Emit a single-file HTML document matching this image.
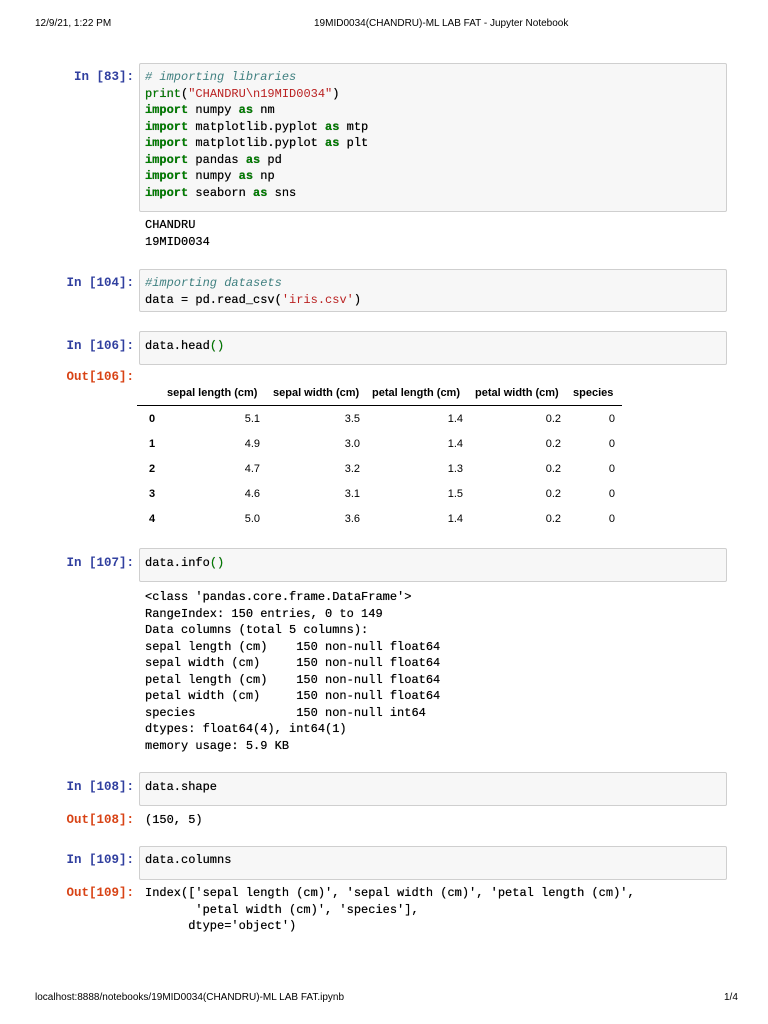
<!DOCTYPE html>
<html><head><meta charset="utf-8"><style>
body{margin:0;width:768px;height:1024px;background:#fff;position:relative;overflow:hidden;font-family:"Liberation Sans",sans-serif}
.a{position:absolute;white-space:pre}
.m{font-family:"Liberation Mono",monospace;font-size:12px;line-height:16.5px;color:#000;text-shadow:0 0 0.4px #000}
.pin{color:#303f9f;font-family:"Liberation Mono",monospace;font-size:12.5px;line-height:16.5px;text-align:right;width:76px;left:58px;font-weight:bold}
.pout{color:#d84315;font-family:"Liberation Mono",monospace;font-size:12.5px;line-height:16.5px;text-align:right;width:76px;left:58px;font-weight:bold}
.box{position:absolute;left:139px;width:586px;border:1px solid #cfcfcf;background:#f7f7f7;border-radius:2px}
.k{color:#008000;font-weight:bold}
.s{color:#ba2121;text-shadow:none}
.c{color:#408080;font-style:italic;text-shadow:none}
.hd{font-size:10px;color:#000}
.t{font-size:11px;color:#000;position:absolute}
.th{font-weight:bold}
</style></head><body>
<div class="a hd" style="left:35px;top:18px">12/9/21, 1:22 PM</div>
<div class="a hd" style="left:314px;top:18px">19MID0034(CHANDRU)-ML LAB FAT - Jupyter Notebook</div>
<div class="a hd" style="left:35px;top:992px">localhost:8888/notebooks/19MID0034(CHANDRU)-ML LAB FAT.ipynb</div>
<div class="a hd" style="left:724px;top:992px">1/4</div>

<div class="a pin" style="top:69px">In [83]:</div>
<div class="box" style="top:63px;height:147px"></div>
<div class="a m" style="left:145px;top:69px"><span class="c"># importing libraries</span>
<span class="k" style="font-weight:normal">print</span>(<span class="s">"CHANDRU\n19MID0034"</span>)
<span class="k">import</span> numpy <span class="k">as</span> nm
<span class="k">import</span> matplotlib.pyplot <span class="k">as</span> mtp
<span class="k">import</span> matplotlib.pyplot <span class="k">as</span> plt
<span class="k">import</span> pandas <span class="k">as</span> pd
<span class="k">import</span> numpy <span class="k">as</span> np
<span class="k">import</span> seaborn <span class="k">as</span> sns</div>
<div class="a m" style="left:145px;top:217px">CHANDRU
19MID0034</div>

<div class="a pin" style="top:275px">In [104]:</div>
<div class="box" style="top:269px;height:41px"></div>
<div class="a m" style="left:145px;top:275px"><span class="c">#importing datasets</span>
data = pd.read_csv(<span class="s">'iris.csv'</span>)</div>

<div class="a pin" style="top:338px">In [106]:</div>
<div class="box" style="top:331px;height:32px"></div>
<div class="a m" style="left:145px;top:338px">data.head<span style="color:#008000">()</span></div>

<div class="a pout" style="top:369px">Out[106]:</div>
<div class="t th" style="left:167px;top:387px">sepal length (cm)</div>
<div class="t th" style="left:273px;top:387px">sepal width (cm)</div>
<div class="t th" style="left:372px;top:387px">petal length (cm)</div>
<div class="t th" style="left:475px;top:387px">petal width (cm)</div>
<div class="t th" style="left:573px;top:387px">species</div>
<div style="position:absolute;left:137px;top:405px;width:485px;height:1px;background:#000"></div>

<div class="t th" style="left:149px;top:413px">0</div><div class="t" style="left:200px;width:60px;text-align:right;top:413px">5.1</div><div class="t" style="left:300px;width:60px;text-align:right;top:413px">3.5</div><div class="t" style="left:403px;width:60px;text-align:right;top:413px">1.4</div><div class="t" style="left:501px;width:60px;text-align:right;top:413px">0.2</div><div class="t" style="left:555px;width:60px;text-align:right;top:413px">0</div>
<div class="t th" style="left:149px;top:438px">1</div><div class="t" style="left:200px;width:60px;text-align:right;top:438px">4.9</div><div class="t" style="left:300px;width:60px;text-align:right;top:438px">3.0</div><div class="t" style="left:403px;width:60px;text-align:right;top:438px">1.4</div><div class="t" style="left:501px;width:60px;text-align:right;top:438px">0.2</div><div class="t" style="left:555px;width:60px;text-align:right;top:438px">0</div>
<div class="t th" style="left:149px;top:463px">2</div><div class="t" style="left:200px;width:60px;text-align:right;top:463px">4.7</div><div class="t" style="left:300px;width:60px;text-align:right;top:463px">3.2</div><div class="t" style="left:403px;width:60px;text-align:right;top:463px">1.3</div><div class="t" style="left:501px;width:60px;text-align:right;top:463px">0.2</div><div class="t" style="left:555px;width:60px;text-align:right;top:463px">0</div>
<div class="t th" style="left:149px;top:488px">3</div><div class="t" style="left:200px;width:60px;text-align:right;top:488px">4.6</div><div class="t" style="left:300px;width:60px;text-align:right;top:488px">3.1</div><div class="t" style="left:403px;width:60px;text-align:right;top:488px">1.5</div><div class="t" style="left:501px;width:60px;text-align:right;top:488px">0.2</div><div class="t" style="left:555px;width:60px;text-align:right;top:488px">0</div>
<div class="t th" style="left:149px;top:513px">4</div><div class="t" style="left:200px;width:60px;text-align:right;top:513px">5.0</div><div class="t" style="left:300px;width:60px;text-align:right;top:513px">3.6</div><div class="t" style="left:403px;width:60px;text-align:right;top:513px">1.4</div><div class="t" style="left:501px;width:60px;text-align:right;top:513px">0.2</div><div class="t" style="left:555px;width:60px;text-align:right;top:513px">0</div>

<div class="a pin" style="top:555px">In [107]:</div>
<div class="box" style="top:548px;height:32px"></div>
<div class="a m" style="left:145px;top:555px">data.info<span style="color:#008000">()</span></div>
<div class="a m" style="left:145px;top:589px">&lt;class 'pandas.core.frame.DataFrame'&gt;
RangeIndex: 150 entries, 0 to 149
Data columns (total 5 columns):
sepal length (cm)    150 non-null float64
sepal width (cm)     150 non-null float64
petal length (cm)    150 non-null float64
petal width (cm)     150 non-null float64
species              150 non-null int64
dtypes: float64(4), int64(1)
memory usage: 5.9 KB</div>

<div class="a pin" style="top:779px">In [108]:</div>
<div class="box" style="top:772px;height:32px"></div>
<div class="a m" style="left:145px;top:779px">data.shape</div>
<div class="a pout" style="top:812px">Out[108]:</div>
<div class="a m" style="left:145px;top:812px">(150, 5)</div>

<div class="a pin" style="top:852px">In [109]:</div>
<div class="box" style="top:846px;height:32px"></div>
<div class="a m" style="left:145px;top:852px">data.columns</div>
<div class="a pout" style="top:885px">Out[109]:</div>
<div class="a m" style="left:145px;top:885px">Index(['sepal length (cm)', 'sepal width (cm)', 'petal length (cm)',
       'petal width (cm)', 'species'],
      dtype='object')</div>
</body></html>
